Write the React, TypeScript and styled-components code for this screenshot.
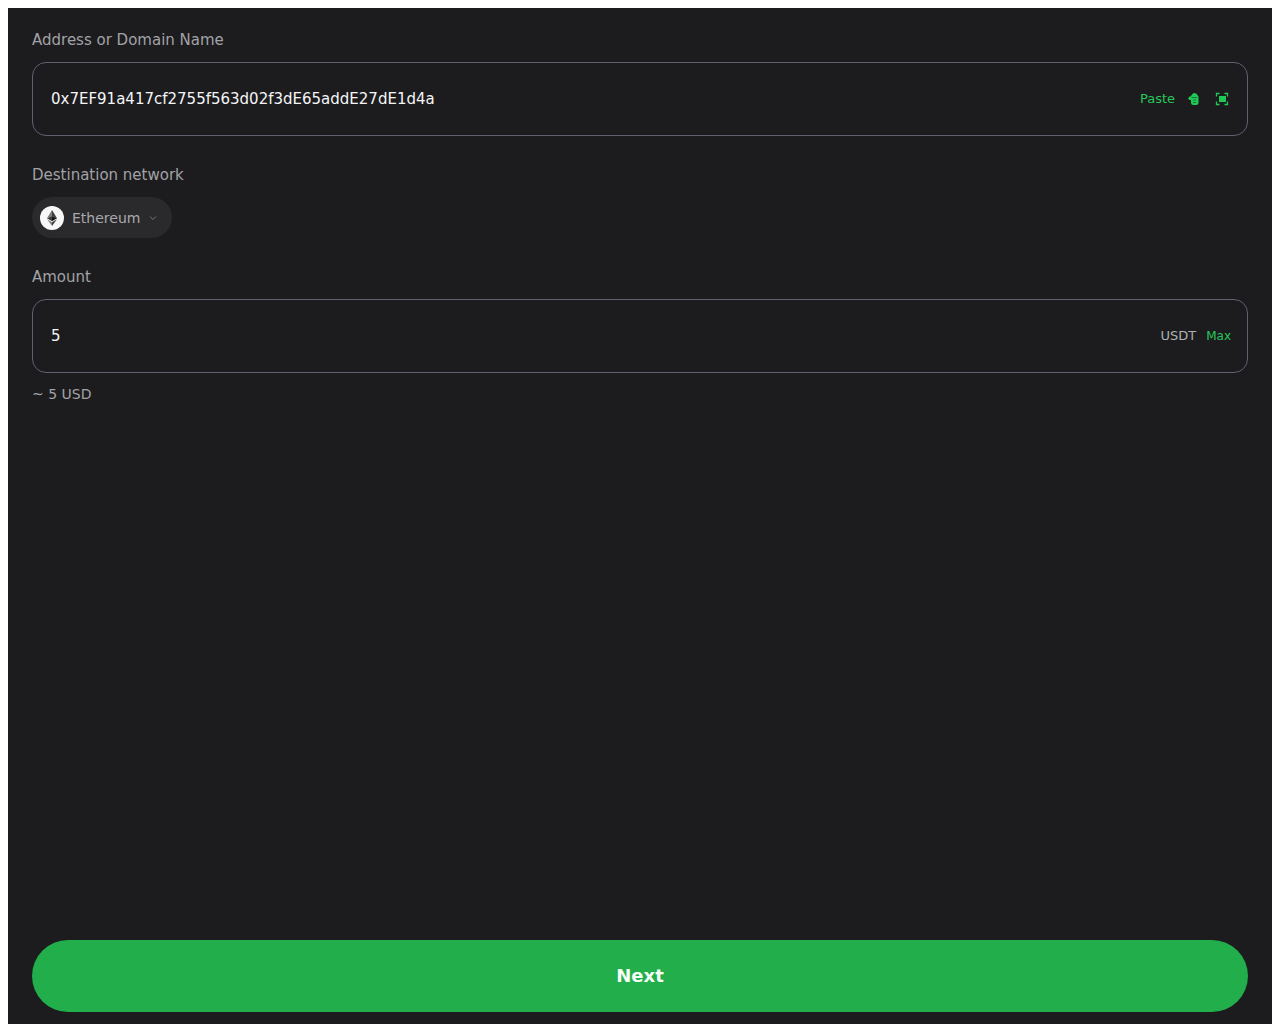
import React, { useState } from "react";
import styled, { createGlobalStyle } from "styled-components";

const GlobalStyle = createGlobalStyle`
  *, *::before, *::after { box-sizing: border-box; }
  body {
    margin: 8px 8px 0;
    background: #ffffff;
    font-family: "DejaVu Sans", sans-serif;
  }
`;

const Page = styled.form`
  display: flex;
  flex-direction: column;
  gap: 28px;
  min-height: calc(100vh - 8px);
  padding: 21px 24px 12px;
  background: #1c1c1e;
`;

const Section = styled.section`
  display: flex;
  flex-direction: column;
  align-items: stretch;
`;

const Label = styled.label`
  align-self: flex-start;
  margin-bottom: 11px;
  font-size: 15px;
  line-height: 22px;
  color: #a2a2a6;
`;

const Field = styled.div`
  display: flex;
  align-items: center;
  gap: 10px;
  height: 74px;
  padding: 0 16px 0 18px;
  border: 1px solid #625f70;
  border-radius: 14px;
`;

const TextInput = styled.input`
  flex: 1;
  min-width: 0;
  padding: 0;
  border: 0;
  outline: 0;
  background: transparent;
  font-family: inherit;
  font-size: 15px;
  line-height: 24px;
  color: #f5f5f6;
`;

const TextButton = styled.button`
  padding: 0;
  border: 0;
  background: transparent;
  font-family: inherit;
  font-size: ${({ $small }: { $small?: boolean }) => ($small ? "12px" : "13px")};
  line-height: 16px;
  color: #27c659;
  cursor: pointer;
`;

const IconButton = styled.button`
  display: grid;
  place-items: center;
  width: 18px;
  height: 18px;
  padding: 0;
  border: 0;
  background: transparent;
  color: #20c956;
  cursor: pointer;
`;

const Unit = styled.span`
  font-size: 13px;
  line-height: 16px;
  color: #b0b0b4;
`;

const NetworkChip = styled.div`
  display: flex;
  align-items: center;
  align-self: flex-start;
  gap: 8px;
  width: 140px;
  height: 41px;
  padding: 0 14px 0 8px;
  border-radius: 21px;
  background: #2a2a2c;
  color: #a2a2a6;
`;

const NetworkSelect = styled.select`
  flex: 1;
  min-width: 0;
  padding: 0;
  border: 0;
  outline: 0;
  appearance: none;
  background: transparent;
  font-family: inherit;
  font-size: 14px;
  line-height: 20px;
  color: #a8a8ac;
`;

const Hint = styled.p`
  margin: 11px 0 0;
  font-size: 14px;
  line-height: 20px;
  color: #a2a2a6;
`;

const NextButton = styled.button`
  height: 72px;
  margin-top: auto;
  padding: 0 0 2px;
  border: 0;
  border-radius: 36px;
  background: #21ae4b;
  font-family: inherit;
  font-size: 18px;
  font-weight: 700;
  color: #f8fff9;
  cursor: pointer;
`;

const Actions = styled.div`
  display: flex;
  align-items: center;
  gap: 10px;
`;

function AddressBookIcon() {
  return (
    <svg width="12" height="12" viewBox="0 0 12 12" aria-hidden="true">
      <path
        fill="currentColor"
        d="M4 1.500Q4.500 0 6.500 0T9 1.500L10.500 3.500V9.500Q10.500 12 8 12H5.500Q3 12 3 9.500V7H1.500L0 5.500 1.500 3.500H2.500z"
      />
      <path d="M3.500 4.500H9M5 7h3M5 9.500h3" fill="none" stroke="#157a38" />
    </svg>
  );
}

function ScanIcon() {
  return (
    <svg width="14" height="14" viewBox="0 0 14 14" aria-hidden="true">
      <path
        d="M1.500 4.500v-3h3M9.500 1.500h3v3M12.500 9.500v3h-3M4.500 12.500h-3v-3"
        fill="none"
        stroke="currentColor"
        strokeWidth="1.300"
      />
      <rect x="4" y="4" width="7" height="6" fill="currentColor" />
    </svg>
  );
}

function EthereumIcon() {
  return (
    <svg width="24" height="24" viewBox="0 0 24 24" aria-hidden="true">
      <circle cx="12" cy="12" r="12" fill="#f7f7f7" />
      <path d="M12 4 7 12.300 12 10z" fill="#7c7c7c" />
      <path d="M12 4v6l5 2.300z" fill="#3e3e3e" />
      <path d="M7 12.300 12 10v5.300z" fill="#3e3e3e" />
      <path d="M17 12.300 12 10v5.300z" fill="#171717" />
      <path d="M7 13.300 12 20v-3.700z" fill="#858585" />
      <path d="M17 13.300 12 20v-3.700z" fill="#3e3e3e" />
    </svg>
  );
}

function ChevronIcon() {
  return (
    <svg width="10" height="10" viewBox="0 0 10 10" aria-hidden="true">
      <path d="m2 3.500 3 3 3-3" fill="none" stroke="#77777b" />
    </svg>
  );
}

export default function App() {
  const [address, setAddress] = useState("0x7EF91a417cf2755f563d02f3dE65addE27dE1d4a");
  const [amount, setAmount] = useState("5");

  return (
    <>
      <GlobalStyle />
      <Page onSubmit={(event) => event.preventDefault()}>
        <Section>
          <Label htmlFor="address">Address or Domain Name</Label>
          <Field>
            <TextInput
              id="address"
              spellCheck={false}
              value={address}
              onChange={(event) => setAddress(event.target.value)}
            />
            <Actions>
              <TextButton type="button">Paste</TextButton>
              <IconButton type="button" aria-label="Address book">
                <AddressBookIcon />
              </IconButton>
              <IconButton type="button" aria-label="Scan code">
                <ScanIcon />
              </IconButton>
            </Actions>
          </Field>
        </Section>
        <Section>
          <Label htmlFor="network">Destination network</Label>
          <NetworkChip>
            <EthereumIcon />
            <NetworkSelect id="network" defaultValue="ethereum">
              <option value="ethereum">Ethereum</option>
            </NetworkSelect>
            <ChevronIcon />
          </NetworkChip>
        </Section>
        <Section>
          <Label htmlFor="amount">Amount</Label>
          <Field>
            <TextInput
              id="amount"
              inputMode="decimal"
              value={amount}
              onChange={(event) => setAmount(event.target.value)}
            />
            <Actions>
              <Unit>USDT</Unit>
              <TextButton type="button" $small>
                Max
              </TextButton>
            </Actions>
          </Field>
          <Hint>~ 5 USD</Hint>
        </Section>
        <NextButton type="submit">Next</NextButton>
      </Page>
    </>
  );
}
